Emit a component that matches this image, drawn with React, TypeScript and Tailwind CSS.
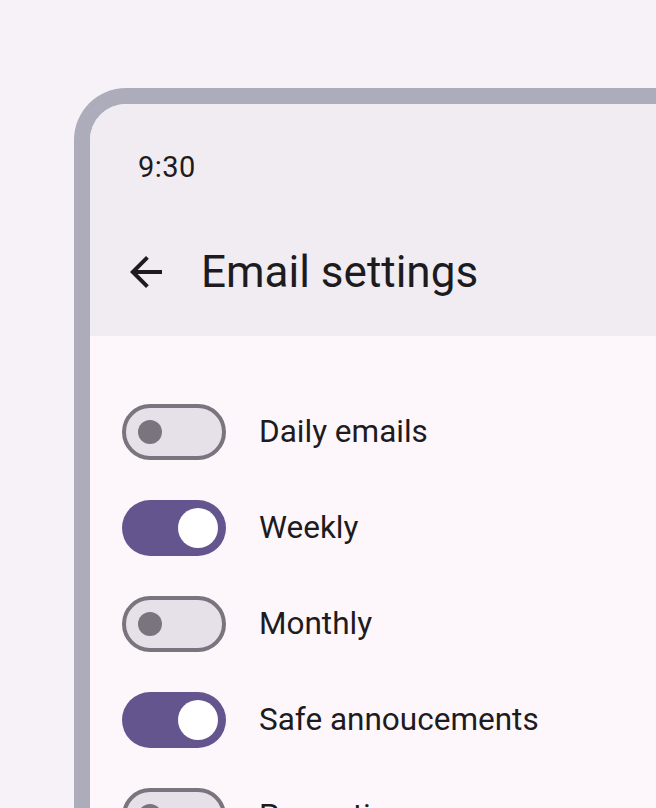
import { useState } from 'react'

const SETTINGS = [
  { label: 'Daily emails', on: false },
  { label: 'Weekly', on: true },
  { label: 'Monthly', on: false },
  { label: 'Safe annoucements', on: true },
  { label: 'Promotions', on: false },
]

function Switch({ on, onToggle }: { on: boolean; onToggle: () => void }) {
  return (
    <button
      type="button"
      onClick={onToggle}
      className={
        on
          ? 'flex h-[56px] w-[104px] shrink-0 items-center justify-end rounded-full bg-[#65558f] pr-[8px]'
          : 'flex h-[56px] w-[104px] shrink-0 items-center justify-start rounded-full border-[4px] border-[#79747e] bg-[#e6e0e9] pl-[12px]'
      }
    >
      {on ? (
        <span className="h-[40px] w-[40px] rounded-full bg-white" />
      ) : (
        <span className="h-[24px] w-[24px] rounded-full bg-[#79747e]" />
      )}
    </button>
  )
}

function BackArrow() {
  return (
    <svg width="48" height="48" viewBox="0 0 24 24" className="shrink-0 text-[#1d1b20]">
      <path
        fill="currentColor"
        d="M20 11H7.83l5.59-5.59L12 4l-8 8 8 8 1.41-1.41L7.83 13H20v-2z"
      />
    </svg>
  )
}

export default function App() {
  const [items, setItems] = useState(SETTINGS)

  const toggle = (i: number) =>
    setItems((prev) => prev.map((it, j) => (j === i ? { ...it, on: !it.on } : it)))

  return (
    <div
      className="h-[808px] w-[656px] overflow-hidden bg-[#f7f2f8] pl-[74px] pt-[88px] text-[#1d1b20]"
      style={{ fontFamily: 'Roboto, "Noto Sans", sans-serif' }}
    >
      <div className="h-[760px] w-[620px] overflow-hidden rounded-tl-[52px] border-l-[16px] border-t-[16px] border-[#adacbb] bg-[#fdf7fc]">
        <div className="bg-[#f0ecf1] pb-[24px]">
          <div className="flex h-[128px] items-center pl-[48px] text-[29px] tracking-[0.5px]">
            9:30
          </div>
          <div className="flex h-[80px] items-center pl-[32px]">
            <BackArrow />
            <h1 className="ml-[31px] text-[44px] leading-none">Email settings</h1>
          </div>
        </div>

        <ul className="pt-[48px]">
          {items.map((it, i) => (
            <li key={it.label} className="flex h-[96px] items-center pl-[32px]">
              <Switch on={it.on} onToggle={() => toggle(i)} />
              <span className="ml-[33px] text-[31.5px]">{it.label}</span>
            </li>
          ))}
        </ul>
      </div>
    </div>
  )
}
